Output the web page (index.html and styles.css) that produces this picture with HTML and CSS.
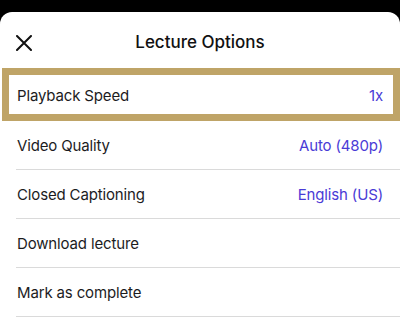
FILE: index.html
```html
<!DOCTYPE html>
<html>
<head>
<meta charset="utf-8">
<link rel="stylesheet" href="styles.css">
</head>
<body>
<div class="sheet">
  <div class="header">
    <button class="close" aria-label="Close">
      <svg width="16" height="16" viewBox="0 0 16 16"><path d="M1 1L15 15M15 1L1 15" stroke="#111" stroke-width="2" stroke-linecap="round" fill="none"/></svg>
    </button>
    <div class="title">Lecture Options</div>
  </div>
  <div class="list">
    <div class="row selected"><span class="label">Playback Speed</span><span class="value">1x</span></div>
    <div class="row"><span class="label">Video Quality</span><span class="value">Auto (480p)</span></div>
    <div class="row"><span class="label">Closed Captioning</span><span class="value">English (US)</span></div>
    <div class="row"><span class="label">Download lecture</span></div>
    <div class="row"><span class="label">Mark as complete</span></div>
  </div>
</div>
</body>
</html>
```
FILE: styles.css
```css
html, body {
  margin: 0;
  padding: 0;
  background: #000;
  height: 100%;
  overflow: hidden;
}
body {
  font-family: Inter, "Noto Sans", sans-serif;
  color: #1c1c1e;
}
.sheet {
  margin-top: 12px;
  background: #fff;
  border-radius: 12px 12px 0 0;
  height: 320px;
}
.header {
  position: relative;
  height: 56px;
  display: flex;
  align-items: center;
  justify-content: center;
}
.close {
  position: absolute;
  left: 16px;
  top: 23px;
  width: 16px;
  height: 16px;
  padding: 0;
  border: 0;
  background: none;
  display: flex;
}
.title {
  font-size: 17px;
  font-weight: 500;
  color: #111;
  margin-top: 4px;
}
.row {
  display: flex;
  justify-content: space-between;
  align-items: center;
  height: 48px;
  margin-left: 16px;
  padding: 0 17px 0 1px;
  border-bottom: 1px solid #dadada;
  font-size: 15px;
  letter-spacing: -0.15px;
}
.row .label {
  padding-top: 1px;
}
.row .value {
  color: #4a3bd6;
  padding-top: 1px;
}
.row.selected {
  margin-left: 2px;
  width: 398px;
  box-sizing: border-box;
  height: 53px;
  border: 7px solid #bfa467;
  padding: 0 10px 0 8px;
}
```
